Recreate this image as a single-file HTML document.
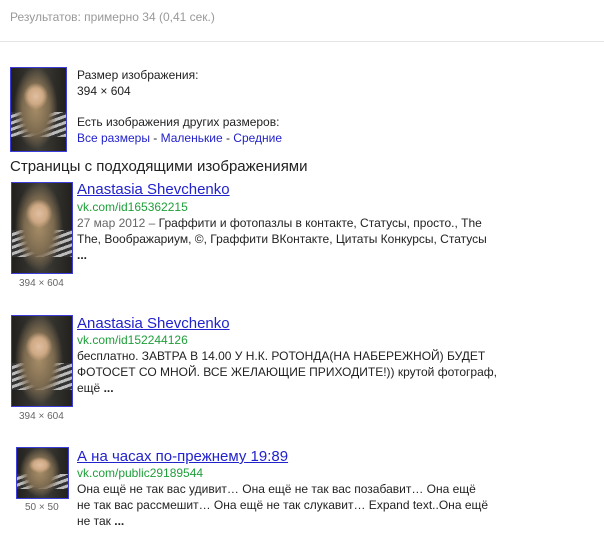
<!DOCTYPE html>
<html><head><meta charset="utf-8"><style>
body{margin:0;width:604px;height:535px;background:#fff;font-family:"Liberation Sans",Arial,sans-serif;position:relative;overflow:hidden;color:#222}
.a{position:absolute;white-space:nowrap}
.s{font-size:12px;line-height:16px}
.g{color:#999}
.l{color:#2222cc}
.u{color:#1e9e3a}
.t{font-size:15px;color:#2222cc;text-decoration:underline}
.img{position:absolute;border:1px solid #3d3ddc;box-sizing:border-box;background:
radial-gradient(ellipse 22% 16% at 45% 34%,#e0bea0 0,#cfa985 60%,transparent 100%),
radial-gradient(ellipse 40% 50% at 45% 48%,#a88e68 0,#7d6b50 60%,transparent 100%),
repeating-linear-gradient(160deg,#333 0 3px,#bbb 3px 6px) 0 75%/100% 30% no-repeat,
linear-gradient(90deg,#22211e,#3e3d38 50%,#22211d)}
.sz{position:absolute;font-size:10px;color:#666;white-space:nowrap}
</style></head><body>
<div class="a s g" style="left:10px;top:9px;font-size:12px">Результатов: примерно 34 (0,41 сек.)</div>
<div style="position:absolute;left:0;top:41px;width:604px;height:1px;background:#e5e5e5"></div>

<div class="img" style="left:10px;top:67px;width:57px;height:85px"></div>
<div class="a s" style="left:77px;top:67px">Размер изображения:<br>394 × 604</div>
<div class="a s" style="left:77px;top:114px">Есть изображения других размеров:<br><span class="l">Все размеры</span> - <span class="l">Маленькие</span> - <span class="l">Средние</span></div>
<div class="a" style="left:10px;top:158px;font-size:15px">Страницы с подходящими изображениями</div>

<div class="img" style="left:11px;top:182px;width:62px;height:92px"></div>
<div class="sz" style="left:19px;top:278px">394 × 604</div>
<div class="a t" style="left:77px;top:181px">Anastasia Shevchenko</div>
<div class="a s" style="left:77px;top:199px"><span class="u">vk.com/id165362215</span><br><span style="color:#666">27 мар 2012 –</span> Граффити и фотопазлы в контакте, Статусы, просто., The<br>The, Воображариум, ©, Граффити ВКонтакте, Цитаты Конкурсы, Статусы<br><b>...</b></div>

<div class="img" style="left:11px;top:315px;width:62px;height:92px"></div>
<div class="sz" style="left:19px;top:411px">394 × 604</div>
<div class="a t" style="left:77px;top:315px">Anastasia Shevchenko</div>
<div class="a s" style="left:77px;top:332px"><span class="u">vk.com/id152244126</span><br>бесплатно. ЗАВТРА В 14.00 У Н.К. РОТОНДА(НА НАБЕРЕЖНОЙ) БУДЕТ<br>ФОТОСЕТ СО МНОЙ. ВСЕ ЖЕЛАЮЩИЕ ПРИХОДИТЕ!)) крутой фотограф,<br>ещё <b>...</b></div>

<div class="img" style="left:16px;top:447px;width:53px;height:52px"></div>
<div class="sz" style="left:25px;top:502px">50 × 50</div>
<div class="a t" style="left:77px;top:448px">А на часах по-прежнему 19:89</div>
<div class="a s" style="left:77px;top:465px"><span class="u">vk.com/public29189544</span><br>Она ещё не так вас удивит… Она ещё не так вас позабавит… Она ещё<br>не так вас рассмешит… Она ещё не так слукавит… Expand text..Она ещё<br>не так <b>...</b></div>
</body></html>
